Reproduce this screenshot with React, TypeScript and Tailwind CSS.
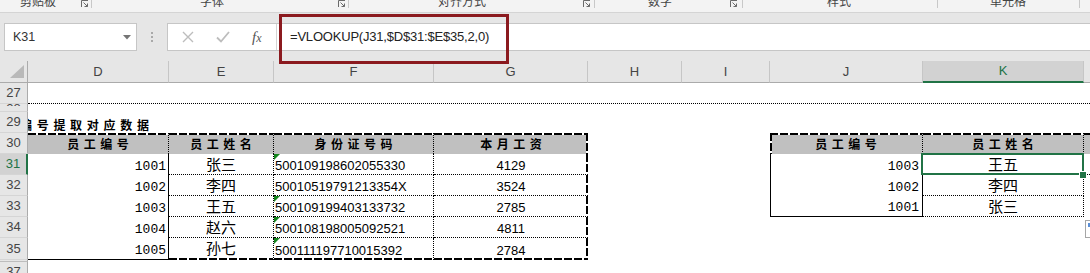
import React from "react";

const sans = "font-['Liberation_Sans',Arial,sans-serif]";
const cjk = "font-['Noto_Sans_CJK_SC','Noto_Sans',sans-serif]";
const mono = "font-['Liberation_Mono','Courier_New',monospace]";

function ThickTop() {
  return <span className="pointer-events-none absolute inset-x-0 top-0 h-[2px] bg-[repeating-linear-gradient(90deg,#000_0_8px,#fff_8px_10px)]" />;
}
function ThickBottom() {
  return <span className="pointer-events-none absolute inset-x-0 bottom-0 h-[2px] bg-[repeating-linear-gradient(90deg,#000_0_8px,#fff_8px_10px)]" />;
}
function ThickRight() {
  return <span className="pointer-events-none absolute inset-y-0 right-0 w-[2px] bg-[repeating-linear-gradient(180deg,#000_0_8px,#fff_8px_10px)]" />;
}
function ThickLeft() {
  return <span className="pointer-events-none absolute inset-y-0 left-0 w-[2px] bg-[repeating-linear-gradient(180deg,#000_0_8px,#fff_8px_10px)]" />;
}

function Launcher() {
  return (
    <svg width="8" height="8" viewBox="0 0 8 8" className="shrink-0">
      <path d="M0.5 7V0.5H7" fill="none" stroke="#6a6a6a" />
      <path d="M2.5 2.5L6.5 6.5M6.5 3.5V6.5H3.5" fill="none" stroke="#6a6a6a" />
    </svg>
  );
}

function Sep() {
  return <span className="w-px h-[8px] shrink-0 bg-[#c8c8c8]" />;
}

function RowHead({ label, active = false, className = "" }: { label: string; active?: boolean; className?: string }) {
  return (
    <div
      className={`w-[28px] shrink-0 flex items-center justify-center border-b border-b-[#d5d5d5] ${sans} text-[13px] ${
        active ? "bg-[#d2d2d2] text-[#217346] border-r-2 border-r-[#217346]" : "bg-[#e6e6e6] text-[#444] border-r border-r-[#ababab]"
      } ${className}`}
    >
      {label}
    </div>
  );
}

type Rec = { n: string; d: string; e: string; f: string; g: string; tri: boolean; j?: string; k?: string };

const rows: Rec[] = [
  { n: "31", d: "1001", e: "张三", f: "500109198602055330", g: "4129", tri: true, j: "1003", k: "王五" },
  { n: "32", d: "1002", e: "李四", f: "50010519791213354X", g: "3524", tri: false, j: "1002", k: "李四" },
  { n: "33", d: "1003", e: "王五", f: "500109199403133732", g: "2785", tri: true, j: "1001", k: "张三" },
  { n: "34", d: "1004", e: "赵六", f: "500108198005092521", g: "4811", tri: true },
  { n: "35", d: "1005", e: "孙七", f: "500111197710015392", g: "2784", tri: true },
];

function DataRow({ r, idx }: { r: Rec; idx: number }) {
  const last = idx === 4;
  const first = idx === 0;
  const jLast = idx === 2;
  const cell = "relative shrink-0 flex items-end leading-[16px] text-black";
  return (
    <div className={`flex ${last ? "h-[22px]" : "h-[21px]"}`}>
      <RowHead label={r.n} active={first} />
      <div className={`${cell} w-[141px] justify-end pr-[2px] ${mono} text-[13px] border-r border-black ${last ? "border-b" : ""}`}>{r.d}</div>
      <div className={`${cell} w-[105px] justify-center ${cjk} text-[15px] border-r border-dotted border-black ${last ? "pb-[4px]" : "border-b pb-[2px]"}`}>
        {r.e}
        {last && <ThickBottom />}
      </div>
      <div className={`${cell} w-[160px] pl-[1px] ${sans} text-[13px] border-r border-dotted border-black ${last ? "pb-[1px]" : "border-b"}`}>
        {r.tri && <span className="absolute left-0 top-0 w-0 h-0 border-t-[6px] border-r-[6px] border-t-[#13851c] border-r-transparent" />}
        {r.f}
        {last && <ThickBottom />}
      </div>
      <div className={`${cell} w-[154px] justify-center ${sans} text-[13px] border-dotted border-black ${last ? "pb-[1px]" : "border-b"}`}>
        {r.g}
        <ThickRight />
        {last && <ThickBottom />}
      </div>
      <div className="w-[182px] shrink-0" />
      {r.j ? (
        <div className={`${cell} w-[153px] justify-end pr-[3px] ${mono} text-[13px] border-x border-black ${jLast ? "border-b" : ""}`}>{r.j}</div>
      ) : (
        <div className="w-[153px] shrink-0" />
      )}
      {r.k ? (
        <div className={`${cell} w-[161px] justify-center pb-[2px] ${cjk} text-[15px] border-r border-b border-dotted border-black`}>
          {r.k}
          {first && (
            <>
              <span className="pointer-events-none absolute z-10 -left-[2px] -top-px -right-px -bottom-px border-2 border-[#217346]" />
              <span className="pointer-events-none absolute z-20 -right-[4px] -bottom-[5px] w-[8px] h-[8px] bg-[#217346] border border-white" />
            </>
          )}
        </div>
      ) : (
        <div className="w-[161px] shrink-0" />
      )}
      <div className={`flex-1 ${first ? "border-b border-dotted border-black" : ""}`} />
    </div>
  );
}

export default function App() {
  const colHead = `shrink-0 flex items-center justify-center border-r border-r-[#c6c6c6] border-b border-b-[#ababab] ${sans} text-[13px] text-[#444]`;
  const hdrCell = `relative shrink-0 flex items-center justify-center bg-[#c0c0c0] ${cjk} font-bold text-[12px] leading-[16px] text-black tracking-[4.5px] pl-[4.5px]`;
  return (
    <div className="relative w-[1090px] h-[273px] overflow-hidden bg-white">
      {/* Ribbon group labels (cut) */}
      <div className={`flex h-[13px] bg-[#f3f3f3] border-b border-[#d4d4d4] overflow-hidden ${cjk} text-[12px] text-[#444]`}>
        <div className="flex w-[92px] shrink-0 items-start">
          <span className="ml-[20px] -mt-[5px] leading-[12px] whitespace-nowrap">剪贴板</span>
          <span className="ml-auto mr-[2px]"><Launcher /></span>
          <Sep />
        </div>
        <div className="flex w-[257px] shrink-0 items-start">
          <span className="ml-[108px] -mt-[5px] leading-[12px] whitespace-nowrap">字体</span>
          <span className="ml-auto mr-[2px]"><Launcher /></span>
          <Sep />
        </div>
        <div className="flex w-[246px] shrink-0 items-start">
          <span className="ml-[89px] -mt-[5px] leading-[12px] whitespace-nowrap">对齐方式</span>
          <span className="ml-auto mr-[3px]"><Launcher /></span>
          <Sep />
        </div>
        <div className="flex w-[148px] shrink-0 items-start">
          <span className="ml-[53px] -mt-[5px] leading-[12px] whitespace-nowrap">数字</span>
          <span className="ml-auto mr-[4px]"><Launcher /></span>
          <Sep />
        </div>
        <div className="flex w-[195px] shrink-0 items-start">
          <span className="ml-[84px] -mt-[5px] leading-[12px] whitespace-nowrap">样式</span>
          <span className="ml-auto" />
          <Sep />
        </div>
        <div className="flex w-[142px] shrink-0 items-start">
          <span className="ml-[52px] -mt-[5px] leading-[12px] whitespace-nowrap">单元格</span>
          <span className="ml-auto" />
          <Sep />
        </div>
      </div>

      {/* Formula bar */}
      <div className="flex h-[48px] bg-[#e6e6e6] py-[10px]">
        <div className="ml-[4px] w-[133px] shrink-0 bg-white border border-[#c6c6c6] flex items-center pl-[8px] pr-[5px]">
          <span className={`${sans} text-[12.5px] text-[#333]`}>K31</span>
          <svg className="ml-auto" width="8" height="5" viewBox="0 0 8 5">
            <path d="M0 0H8L4 4.5Z" fill="#757575" />
          </svg>
        </div>
        <div className="w-[30px] shrink-0 flex flex-col items-center justify-center gap-[2px]">
          <span className="w-[2px] h-[2px] bg-[#a9a9a9]" />
          <span className="w-[2px] h-[2px] bg-[#a9a9a9]" />
          <span className="w-[2px] h-[2px] bg-[#a9a9a9]" />
        </div>
        <div className="flex-1 flex bg-white border-y border-l border-[#c6c6c6]">
          <div className="w-[109px] shrink-0 flex items-center border-r border-[#d4d4d4] pl-[14px]">
            <svg width="12" height="12" viewBox="0 0 12 12">
              <path d="M1 1L11 11M11 1L1 11" stroke="#bdbdbd" strokeWidth="1.4" />
            </svg>
            <svg className="ml-[22px]" width="14" height="12" viewBox="0 0 14 12">
              <path d="M1 6.5L5 10.5L13 1" fill="none" stroke="#bdbdbd" strokeWidth="1.8" />
            </svg>
            <span className="ml-[22px] font-['Liberation_Serif',serif] italic text-[15px] leading-none text-[#555]">
              f<span className="text-[12px]">x</span>
            </span>
          </div>
          <div className={`flex-1 flex items-center pl-[13px] ${sans} text-[13px] text-[#222] tracking-[-0.2px] whitespace-nowrap`}>
            =VLOOKUP(J31,$D$31:$E$35,2,0)
          </div>
        </div>
      </div>

      {/* Column headers */}
      <div className="flex h-[22px] bg-[#e6e6e6]">
        <div className="w-[28px] shrink-0 flex items-end justify-end pr-[3px] pb-[4px] border-r border-r-[#ababab] border-b border-b-[#ababab]">
          <svg width="14" height="13" viewBox="0 0 14 13">
            <path d="M14 0V13H0Z" fill="#b9b9b9" />
          </svg>
        </div>
        <div className={`${colHead} w-[141px]`}>D</div>
        <div className={`${colHead} w-[105px]`}>E</div>
        <div className={`${colHead} w-[160px]`}>F</div>
        <div className={`${colHead} w-[154px]`}>G</div>
        <div className={`${colHead} w-[94px]`}>H</div>
        <div className={`${colHead} w-[88px]`}>I</div>
        <div className={`${colHead} w-[153px]`}>J</div>
        <div className={`shrink-0 w-[161px] flex items-center justify-center border-r border-r-[#c6c6c6] border-b-2 border-b-[#217346] bg-[#d2d2d2] ${sans} text-[13px] text-[#217346]`}>K</div>
        <div className="flex-1 border-b border-b-[#ababab]" />
      </div>

      {/* Row 27 */}
      <div className="flex h-[21px]">
        <RowHead label="27" />
        <div className="flex-1 border-b border-dotted border-black" />
      </div>
      {/* Row 28 (short) */}
      <div className="flex h-[8px]">
        <div className={`w-[28px] shrink-0 flex justify-center items-start overflow-hidden bg-[#e6e6e6] border-r border-r-[#ababab] border-b border-b-[#d5d5d5] ${sans} text-[13px] text-[#444]`}>
          <div className="h-[3px] overflow-hidden leading-[14px] -mt-px">
            <span className="block -mt-[1px]">28</span>
          </div>
        </div>
        <div className="flex-1" />
      </div>
      {/* Row 29 title */}
      <div className="flex h-[21px]">
        <RowHead label="29" />
        <div className="flex-1 overflow-hidden flex items-end pb-[1px]">
          <span className={`${cjk} font-bold text-[12px] leading-[14px] tracking-[4.7px] -ml-[8px] whitespace-nowrap text-black`}>
            编号提取对应数据
          </span>
        </div>
      </div>
      {/* Row 30 headers */}
      <div className="flex h-[21px]">
        <RowHead label="30" />
        <div className={`${hdrCell} w-[141px] border-r border-dotted border-black`}>
          员工编号
          <ThickTop />
        </div>
        <div className={`${hdrCell} w-[105px] border-r border-dotted border-black`}>
          员工姓名
          <ThickTop />
        </div>
        <div className={`${hdrCell} w-[160px] border-r border-dotted border-black`}>
          身份证号码
          <ThickTop />
        </div>
        <div className={`${hdrCell} w-[154px]`}>
          本月工资
          <ThickTop />
          <ThickRight />
        </div>
        <div className="w-[182px] shrink-0" />
        <div className={`${hdrCell} w-[153px] border-r border-dotted border-black`}>
          员工编号
          <ThickTop />
          <ThickLeft />
        </div>
        <div className={`${hdrCell} w-[161px] border-r border-dotted border-black`}>
          员工姓名
          <ThickTop />
        </div>
        <div className="relative flex-1 bg-[#c0c0c0]">
          <ThickTop />
        </div>
      </div>
      {rows.map((r, i) => (
        <DataRow key={r.n} r={r} idx={i} />
      ))}
      {/* hidden row 36 */}
      <div className="flex h-[2px]">
        <div className="w-[28px] shrink-0 bg-[#e6e6e6] border-r border-r-[#ababab] border-b border-b-[#bdbdbd]" />
        <div className="flex-1" />
      </div>
      {/* Row 37 */}
      <div className="flex h-[21px]">
        <RowHead label="37" />
        <div className="flex-1" />
      </div>

      {/* Red annotation frame */}
      <div className="pointer-events-none absolute left-[279px] top-[14px] w-[230px] h-[50px] border-[3px] border-[#8b1a1f]" />

      {/* Paste options button (partially visible) */}
      <div className="absolute left-[1085px] top-[220px] w-[22px] h-[18px] border border-[#a6a6a6] bg-white flex items-start pt-[2px] pl-[2px]">
        <span className="w-[10px] h-[4px] bg-[#5b8fd6]" />
      </div>
    </div>
  );
}
